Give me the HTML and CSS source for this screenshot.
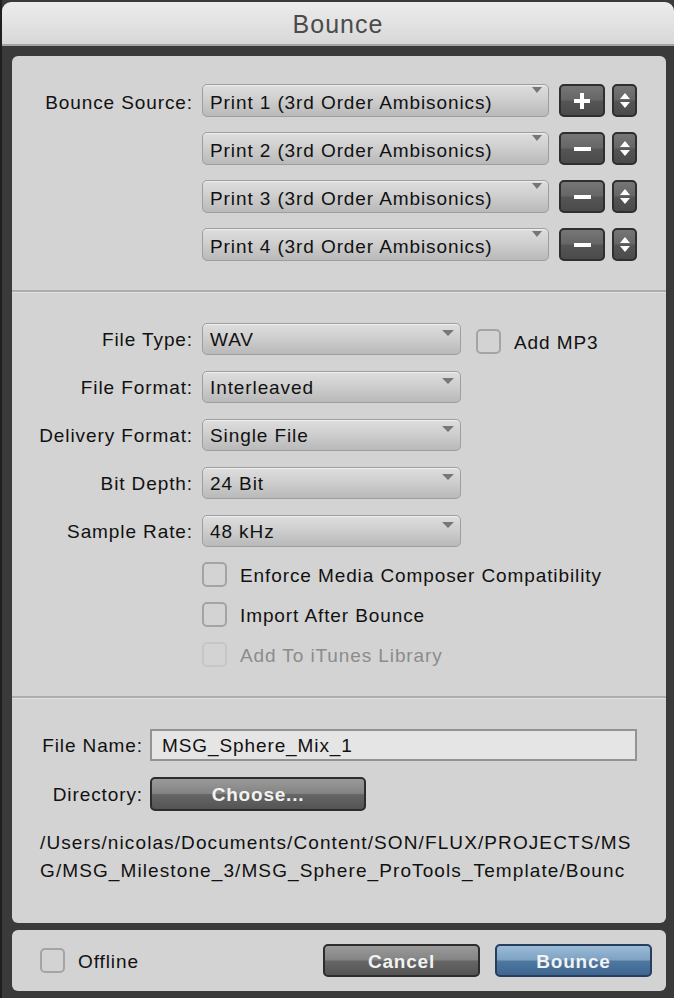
FILE: index.html
```html
<!DOCTYPE html>
<html>
<head>
<meta charset="utf-8">
<title>Bounce</title>
<link rel="stylesheet" href="styles.css">
</head>
<body>
<div class="window">
  <div class="titlebar">Bounce</div>
  <div class="sheet">
    <div class="panel main">
      <section class="sec sources">
        <div class="label src-label">Bounce Source:</div>
        <div class="src-list">
          <div class="src-row">
            <div class="select wide"><span class="value">Print 1 (3rd Order Ambisonics)</span><span class="arrow"></span></div>
            <div class="dbtn pm"><span class="plus"></span></div>
            <div class="dbtn stepper"><span class="up"></span><span class="down"></span></div>
          </div>
          <div class="src-row">
            <div class="select wide"><span class="value">Print 2 (3rd Order Ambisonics)</span><span class="arrow"></span></div>
            <div class="dbtn pm"><span class="minus"></span></div>
            <div class="dbtn stepper"><span class="up"></span><span class="down"></span></div>
          </div>
          <div class="src-row">
            <div class="select wide"><span class="value">Print 3 (3rd Order Ambisonics)</span><span class="arrow"></span></div>
            <div class="dbtn pm"><span class="minus"></span></div>
            <div class="dbtn stepper"><span class="up"></span><span class="down"></span></div>
          </div>
          <div class="src-row">
            <div class="select wide"><span class="value">Print 4 (3rd Order Ambisonics)</span><span class="arrow"></span></div>
            <div class="dbtn pm"><span class="minus"></span></div>
            <div class="dbtn stepper"><span class="up"></span><span class="down"></span></div>
          </div>
        </div>
      </section>

      <section class="sec formats">
        <div class="label">File Type:</div>
        <div class="ctl">
          <div class="select mid"><span class="value">WAV</span><span class="arrow"></span></div>
          <label class="check mp3"><span class="box"></span><span>Add MP3</span></label>
        </div>
        <div class="label">File Format:</div>
        <div class="ctl"><div class="select mid"><span class="value">Interleaved</span><span class="arrow"></span></div></div>
        <div class="label">Delivery Format:</div>
        <div class="ctl"><div class="select mid"><span class="value">Single File</span><span class="arrow"></span></div></div>
        <div class="label">Bit Depth:</div>
        <div class="ctl"><div class="select mid"><span class="value">24 Bit</span><span class="arrow"></span></div></div>
        <div class="label">Sample Rate:</div>
        <div class="ctl"><div class="select mid"><span class="value">48 kHz</span><span class="arrow"></span></div></div>
        <div class="checks">
          <label class="check"><span class="box"></span><span>Enforce Media Composer Compatibility</span></label>
          <label class="check"><span class="box"></span><span>Import After Bounce</span></label>
          <label class="check disabled"><span class="box"></span><span>Add To iTunes Library</span></label>
        </div>
      </section>

      <section class="sec output">
        <div class="label">File Name:</div>
        <div class="ctl"><div class="input">MSG_Sphere_Mix_1</div></div>
        <div class="label">Directory:</div>
        <div class="ctl"><div class="gbtn choose">Choose...</div></div>
        <div class="path">
          <div>/Users/nicolas/Documents/Content/SON/FLUX/PROJECTS/MS</div>
          <div>G/MSG_Milestone_3/MSG_Sphere_ProTools_Template/Bounc</div>
        </div>
      </section>
    </div>

    <div class="panel footer">
      <label class="check"><span class="box"></span><span>Offline</span></label>
      <div class="actions">
        <div class="gbtn cancel">Cancel</div>
        <div class="gbtn primary">Bounce</div>
      </div>
    </div>
  </div>
</div>
</body>
</html>
```

FILE: styles.css
```css
* { box-sizing: border-box; }

html, body {
  margin: 0;
  padding: 0;
}

body {
  width: 674px;
  height: 998px;
  overflow: hidden;
  background: #3a3a3a;
  font-family: "Liberation Sans", Arial, Helvetica, sans-serif;
  font-size: 19px;
  letter-spacing: 0.9px;
  color: #111;
  border-left: 2px solid #1f1f1f;
}

.window {
  padding-top: 2px;
}

.titlebar {
  height: 44px;
  border-bottom: 2px solid #a4a4a4;
  border-radius: 9px 9px 0 0;
  background: linear-gradient(#ececec, #d8d8d8);
  display: flex;
  align-items: center;
  justify-content: center;
  font-size: 25px;
  letter-spacing: 1px;
  color: #4b4b4b;
  padding-top: 2px;
}

.sheet {
  padding: 10px 8px 0 10px;
  display: flex;
  flex-direction: column;
  gap: 7px;
}

.panel {
  background: #d3d3d3;
  border-radius: 6px;
}

.main {
  height: 867px;
  display: flex;
  flex-direction: column;
}

.sec + .sec {
  border-top: 2px solid #adadad;
  box-shadow: inset 0 1px 0 #e1e1e1;
}

.label {
  text-align: right;
  white-space: nowrap;
  padding-top: 2px;
}

/* ---------- sources ---------- */
.sources {
  height: 234px;
  padding-top: 28px;
  display: grid;
  grid-template-columns: 181px auto;
  column-gap: 9px;
  align-items: start;
}

.src-label {
  line-height: 33px;
}

.src-list {
  display: flex;
  flex-direction: column;
  gap: 15px;
}

.src-row {
  display: flex;
  align-items: center;
}

.select {
  display: flex;
  align-items: flex-start;
  height: 33px;
  border: 1px solid #9e9e9e;
  border-radius: 5px;
  background: linear-gradient(#dedede 0%, #cfcfcf 45%, #b9b9b9 100%);
  box-shadow: inset 0 1px 0 rgba(255,255,255,0.5);
  padding: 0 6px 0 7px;
}

.select .value {
  flex: 1;
  line-height: 31px;
  padding-top: 2px;
  white-space: nowrap;
}

.arrow {
  width: 0;
  height: 0;
  margin-top: 2px;
  border-left: 5px solid transparent;
  border-right: 5px solid transparent;
  border-top: 6px solid #777;
}

.wide { width: 347px; }

.dbtn {
  height: 33px;
  border: 2px solid #2f2f2f;
  border-radius: 5px;
  background: linear-gradient(#767676 0%, #666 48%, #555 52%, #4a4a4a 100%);
  display: flex;
  align-items: center;
  justify-content: center;
}

.pm {
  width: 46px;
  margin-left: 10px;
}

.stepper {
  width: 25px;
  margin-left: 7px;
  flex-direction: column;
  gap: 3px;
}

.plus {
  width: 16px;
  height: 16px;
  background:
    linear-gradient(#fff, #fff) center / 16px 4px no-repeat,
    linear-gradient(#fff, #fff) center / 4px 16px no-repeat;
}

.minus {
  width: 17px;
  height: 4px;
  background: #fff;
}

.up, .down {
  width: 0;
  height: 0;
  border-left: 5px solid transparent;
  border-right: 5px solid transparent;
}
.up { border-bottom: 6px solid #fff; }
.down { border-top: 6px solid #fff; }

/* ---------- formats ---------- */
.formats {
  height: 406px;
  padding-top: 31px;
  display: grid;
  grid-template-columns: 181px auto;
  column-gap: 9px;
  row-gap: 16px;
  align-content: start;
  align-items: center;
}

.formats .label { line-height: 30px; }

.formats .select {
  height: 32px;
}
.formats .select .value { line-height: 28px; }
.formats .arrow {
  margin-top: 6px;
  border-left-width: 6px;
  border-right-width: 6px;
}

.mid { width: 259px; }

.ctl {
  display: flex;
  align-items: center;
}

.check {
  display: flex;
  align-items: center;
  gap: 13px;
  height: 25px;
}

.check > span:last-child {
  padding-top: 3px;
}

.box {
  width: 25px;
  height: 25px;
  border: 2px solid #a4a4a4;
  border-radius: 5px;
  flex: none;
}

.mp3 {
  margin-left: 15px;
  margin-top: 4px;
}

.checks {
  grid-column: 2;
  display: flex;
  flex-direction: column;
  gap: 15px;
  margin-top: -1px;
}

.check.disabled { color: #8c8c8c; }
.check.disabled .box { border-color: #c6c6c6; }

/* ---------- output ---------- */
.output {
  flex: 1;
  padding-top: 31px;
  display: grid;
  grid-template-columns: 131px auto;
  column-gap: 7px;
  row-gap: 16px;
  align-content: start;
  align-items: center;
}

.input {
  width: 487px;
  height: 32px;
  border: 2px solid #939393;
  background: #e5e5e5;
  padding: 2px 0 0 10px;
  line-height: 26px;
}

.gbtn {
  height: 33px;
  border: 2px solid #2d2d2d;
  border-radius: 5px;
  background: linear-gradient(#9a9a9a 0%, #848484 48%, #666 52%, #545454 100%);
  color: #f2f2f2;
  font-weight: bold;
  font-size: 19px;
  letter-spacing: 0.8px;
  display: flex;
  align-items: center;
  justify-content: center;
  padding-top: 2px;
}

.choose {
  width: 216px;
  height: 34px;
}

.path {
  grid-column: 1 / 3;
  padding-left: 28px;
  margin-top: 2px;
  line-height: 28px;
  white-space: nowrap;
  letter-spacing: 1.1px;
}

/* ---------- footer ---------- */
.footer {
  height: 61px;
  display: flex;
  align-items: center;
  justify-content: space-between;
  padding: 0 14px 0 28px;
}

.actions {
  display: flex;
  gap: 15px;
}

.cancel { width: 157px; }

.primary {
  width: 157px;
  border-color: #263f5c;
  background: linear-gradient(#9bbbd7 0%, #7ea2c4 48%, #4f78a1 52%, #3e6690 100%);
}
```
